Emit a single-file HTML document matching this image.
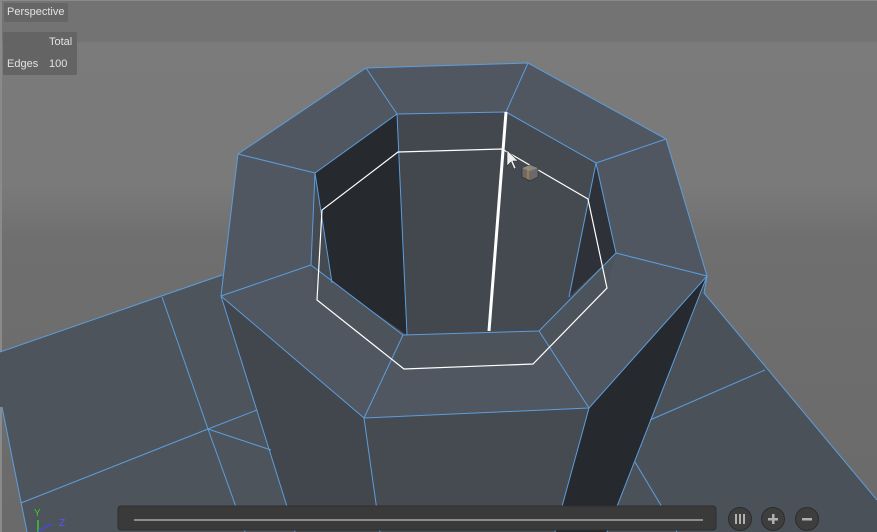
<!DOCTYPE html>
<html><head><style>
html,body{margin:0;padding:0;width:877px;height:532px;overflow:hidden;background:#787878;font-family:"Liberation Sans",sans-serif}
svg{position:absolute;left:0;top:0}
.lbl{position:absolute;color:#e2e2e2;font-size:11px}
</style></head><body>
<svg width="877" height="532" viewBox="0 0 877 532">
<defs>
<linearGradient id="bg" x1="0" y1="0" x2="0" y2="1">
<stop offset="0" stop-color="#7b7b7b"/><stop offset="0.35" stop-color="#7a7a7a"/><stop offset="0.45" stop-color="#6f6f6f"/><stop offset="1" stop-color="#6a6a6a"/>
</linearGradient>
</defs>
<rect width="877" height="532" fill="url(#bg)"/>
<rect width="877" height="42" fill="#737373"/>
<rect x="0" y="0" width="2" height="532" fill="#8a8a8a"/>
<rect x="0" y="0" width="877" height="1" fill="#8a8a8a"/>
<!-- slab left -->
<polygon points="0,352 222,275 295,532 27,532 2,407 0,407" fill="#4e545c"/>
<!-- slab right -->
<polygon points="707,276 704,293 877,500 877,532 600,532" fill="#4b5159"/>
<!-- column left face -->
<polygon points="221,296 364,418 380,532 295,532" fill="#42464d"/>
<!-- column front -->
<polygon points="364,418 589,408 555,532 380,532" fill="#464a51"/>
<!-- column dark right -->
<polygon points="707,276 589,408 555,532 607,532" fill="#26292e"/>
<!-- rim top -->
<polygon points="366,68 528,63 666,139 707,276 589,408 364,418 221,296 238,154" fill="#505761"/>
<!-- hole -->
<polygon points="397,114 506,112 596,163 616,253 539,331 403,335 311,265 315,173" fill="#454950"/>
<polygon points="315,173 397,114 407,335 332,283" fill="#26292e"/>
<polygon points="397,114 506,112 489,331 407,335" fill="#43474e"/>
<polygon points="596,163 616,253 569,297" fill="#2e3238"/>
<!-- rim inner band (front faces) -->
<polygon points="311,265 403,335 539,331 616,253 607,288 533,364 404,369 317,300" fill="#4d535b"/>
<g stroke="#5c9ddc" stroke-width="1" fill="none">
<polygon points="366,68 528,63 666,139 707,276 589,408 364,418 221,296 238,154"/>
<polygon points="397,114 506,112 596,163 616,253 539,331 403,335 311,265 315,173"/>
<line x1="366" y1="68" x2="397" y2="114"/><line x1="528" y1="63" x2="506" y2="112"/>
<line x1="666" y1="139" x2="596" y2="163"/><line x1="707" y1="276" x2="616" y2="253"/>
<line x1="589" y1="408" x2="539" y2="331"/><line x1="364" y1="418" x2="403" y2="335"/>
<line x1="221" y1="296" x2="311" y2="265"/><line x1="238" y1="154" x2="315" y2="173"/>
<line x1="397" y1="114" x2="407" y2="335"/><line x1="315" y1="173" x2="332" y2="283"/>
<line x1="596" y1="163" x2="569" y2="297"/>
<line x1="221" y1="296" x2="295" y2="532"/><line x1="364" y1="418" x2="380" y2="532"/>
<line x1="589" y1="408" x2="555" y2="532"/><line x1="707" y1="276" x2="607" y2="532"/>
<line x1="0" y1="352" x2="222" y2="275"/><line x1="2" y1="407" x2="27" y2="532"/>
<line x1="162" y1="297" x2="208" y2="429"/><line x1="208" y1="429" x2="245" y2="532"/>
<line x1="208" y1="429" x2="21" y2="503"/><line x1="208" y1="429" x2="257" y2="410"/>
<line x1="208" y1="429" x2="271" y2="450"/>
<line x1="707" y1="276" x2="704" y2="293"/>
<line x1="704" y1="293" x2="877" y2="500"/><line x1="765" y1="370" x2="650" y2="420"/>
<line x1="635" y1="462" x2="677" y2="532"/>
</g>
<g stroke="#fff" fill="none">
<polygon points="398,152 502,149 588,199 607,288 533,364 404,369 317,300 322,210" stroke-width="1.2"/>
<line x1="506" y1="112" x2="489" y2="331" stroke-width="3"/>
</g>
<!-- cursor -->
<path d="M507,150 L507,166 L511,162 L514,169 L516,168 L513,161 L518,161 Z" fill="#eee" stroke="#333" stroke-width="0.6"/>
<g>
<polygon points="522,168 530,165 538,168 538,177 530,181 522,177" fill="#6a6a6a" stroke="#2a2a2a" stroke-width="0.6"/>
<polygon points="522,168 530,171 538,168 530,165" fill="#888"/>
<line x1="528" y1="166" x2="528" y2="179" stroke="#d98a2a" stroke-width="1"/>
</g>
<!-- bottom bar -->
<rect x="118" y="506" width="598" height="24" rx="3" fill="#3a3a3a" stroke="#2e2e2e"/>
<rect x="134" y="519" width="569" height="2" fill="#8c8c8c"/>
<g fill="#3e3e3e" stroke="#2c2c2c">
<circle cx="740" cy="519" r="11.5"/><circle cx="773" cy="519" r="11.5"/><circle cx="807" cy="519" r="11.5"/>
</g>
<g fill="#b0b0b0">
<rect x="735" y="514" width="2" height="10"/><rect x="739" y="514" width="2" height="10"/><rect x="743" y="514" width="2" height="10"/>
<rect x="768" y="518" width="10" height="2.5"/><rect x="772" y="514" width="2.5" height="10"/>
<rect x="802" y="518" width="10" height="2.5"/>
</g>
<!-- axis -->
<line x1="38" y1="520" x2="38" y2="532" stroke="#3c3" stroke-width="1.5"/>
<line x1="38" y1="531" x2="52" y2="524" stroke="#44f" stroke-width="1.2"/>
<text x="34" y="516" font-size="10" fill="#3c3" font-family="Liberation Sans">Y</text>
<text x="59" y="526" font-size="10" fill="#55f" font-family="Liberation Sans">Z</text>
</svg>
<div style="position:absolute;left:4px;top:3px;width:64px;height:19px;background:#666;border-radius:2px"></div>
<div class="lbl" style="left:7px;top:6px">Perspective</div>
<div style="position:absolute;left:3px;top:32px;width:74px;height:43px;background:#646464;border-radius:2px"></div>
<div class="lbl" style="left:49px;top:36px">Total</div>
<div class="lbl" style="left:7px;top:58px">Edges</div>
<div class="lbl" style="left:49px;top:58px">100</div>
</body></html>
